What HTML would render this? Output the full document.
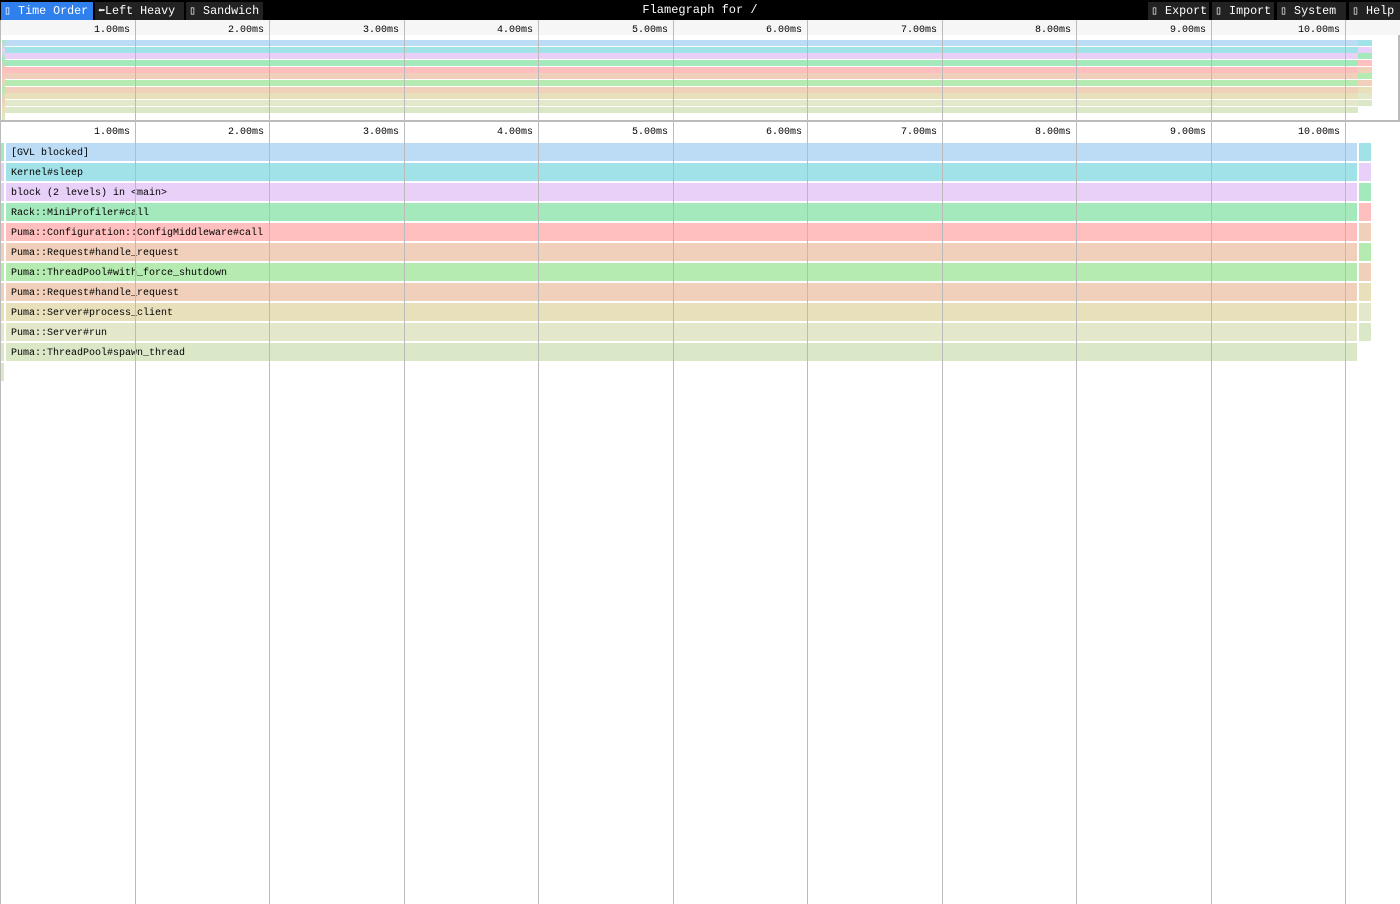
<!DOCTYPE html>
<html><head><meta charset="utf-8"><style>
*{margin:0;padding:0;box-sizing:border-box}
body{width:1400px;height:904px;background:#fff;position:relative;overflow:hidden;font-family:"Liberation Mono",monospace;}
.a{position:absolute}
.top{left:0;top:0;width:1400px;height:20px;background:#000}
.tab{position:absolute;top:2px;height:18px;line-height:19px;background:#222;color:#fff;font-size:11.7px;padding-left:3px;white-space:nowrap}
.g{position:absolute;width:1px;background:#bbb;z-index:5}
.lbl{position:absolute;font-size:10px;color:#000;text-align:right;width:80px;z-index:6}
.r{position:absolute;height:18px;font-size:10px;line-height:22px;padding-left:5px;color:#000;white-space:nowrap}
.m{position:absolute;height:6px}
</style></head><body>
<div class="a top"></div>
<div class="tab" style="left:1px;width:92px;background:#2f80ed">▯ Time Order</div>
<div class="tab" style="left:95px;width:89px">⬅Left Heavy</div>
<div class="tab" style="left:186px;width:77px">▯ Sandwich</div>
<div class="a" style="left:0;top:1px;width:1400px;text-align:center;color:#fff;font-size:12px;line-height:18px">Flamegraph for /</div>
<div class="tab" style="left:1148px;width:61px">▯ Export</div>
<div class="tab" style="left:1212px;width:62px">▯ Import</div>
<div class="tab" style="left:1277px;width:69px">▯  System</div>
<div class="tab" style="left:1349px;width:51px">▯ Help</div>

<div class="a" style="left:0;top:20px;width:1400px;height:15px;background:#f6f6f6"></div>
<div class="a" style="left:0;top:20px;width:1px;height:884px;background:#bbb;z-index:5"></div>
<div class="a" style="left:1398px;top:35px;width:2px;height:87px;background:#bbb"></div>
<div class="a" style="left:0;top:120px;width:1400px;height:2px;background:#bbb;z-index:5"></div>

<div class="m" style="left:5px;top:40px;width:1353px;background:#bcdcf5"></div>
<div class="m" style="left:5px;top:47px;width:1353px;background:#a1e1e8"></div>
<div class="m" style="left:5px;top:53px;width:1353px;background:#e8d0f8"></div>
<div class="m" style="left:5px;top:60px;width:1353px;background:#a3e9bb"></div>
<div class="m" style="left:5px;top:67px;width:1353px;background:#ffbfbf"></div>
<div class="m" style="left:5px;top:73px;width:1353px;background:#f0d0bb"></div>
<div class="m" style="left:5px;top:80px;width:1353px;background:#b5ebb0"></div>
<div class="m" style="left:5px;top:87px;width:1353px;background:#f0d0bb"></div>
<div class="m" style="left:5px;top:93px;width:1353px;background:#e8dfbb"></div>
<div class="m" style="left:5px;top:100px;width:1353px;background:#e3e8cb"></div>
<div class="m" style="left:5px;top:107px;width:1353px;background:#dbe8c8"></div>
<div class="m" style="left:1358px;top:40px;width:14px;background:#a1e1e8"></div>
<div class="m" style="left:1358px;top:47px;width:14px;background:#e8d0f8"></div>
<div class="m" style="left:1358px;top:53px;width:14px;background:#a3e9bb"></div>
<div class="m" style="left:1358px;top:60px;width:14px;background:#ffbfbf"></div>
<div class="m" style="left:1358px;top:67px;width:14px;background:#f0d0bb"></div>
<div class="m" style="left:1358px;top:73px;width:14px;background:#b5ebb0"></div>
<div class="m" style="left:1358px;top:80px;width:14px;background:#f0d0bb"></div>
<div class="m" style="left:1358px;top:87px;width:14px;background:#e8dfbb"></div>
<div class="m" style="left:1358px;top:93px;width:14px;background:#e3e8cb"></div>
<div class="m" style="left:1358px;top:100px;width:14px;background:#dbe8c8"></div>
<div class="a" style="left:2px;top:40px;width:3px;height:80px;background:linear-gradient(#a3e9bb,#e8d0f8,#a3e9bb,#ffbfbf,#f0d0bb,#b5ebb0,#f0d0bb,#e8dfbb,#dbe8c8)"></div>

<div class="g" style="left:135px;top:20px;height:100px"></div><div class="g" style="left:135px;top:122px;height:782px"></div>
<div class="g" style="left:269px;top:20px;height:100px"></div><div class="g" style="left:269px;top:122px;height:782px"></div>
<div class="g" style="left:404px;top:20px;height:100px"></div><div class="g" style="left:404px;top:122px;height:782px"></div>
<div class="g" style="left:538px;top:20px;height:100px"></div><div class="g" style="left:538px;top:122px;height:782px"></div>
<div class="g" style="left:673px;top:20px;height:100px"></div><div class="g" style="left:673px;top:122px;height:782px"></div>
<div class="g" style="left:807px;top:20px;height:100px"></div><div class="g" style="left:807px;top:122px;height:782px"></div>
<div class="g" style="left:942px;top:20px;height:100px"></div><div class="g" style="left:942px;top:122px;height:782px"></div>
<div class="g" style="left:1076px;top:20px;height:100px"></div><div class="g" style="left:1076px;top:122px;height:782px"></div>
<div class="g" style="left:1211px;top:20px;height:100px"></div><div class="g" style="left:1211px;top:122px;height:782px"></div>
<div class="g" style="left:1345px;top:20px;height:100px"></div><div class="g" style="left:1345px;top:122px;height:782px"></div>

<div class="lbl" style="left:50px;top:25px">1.00ms</div><div class="lbl" style="left:50px;top:127px">1.00ms</div>
<div class="lbl" style="left:184px;top:25px">2.00ms</div><div class="lbl" style="left:184px;top:127px">2.00ms</div>
<div class="lbl" style="left:319px;top:25px">3.00ms</div><div class="lbl" style="left:319px;top:127px">3.00ms</div>
<div class="lbl" style="left:453px;top:25px">4.00ms</div><div class="lbl" style="left:453px;top:127px">4.00ms</div>
<div class="lbl" style="left:588px;top:25px">5.00ms</div><div class="lbl" style="left:588px;top:127px">5.00ms</div>
<div class="lbl" style="left:722px;top:25px">6.00ms</div><div class="lbl" style="left:722px;top:127px">6.00ms</div>
<div class="lbl" style="left:857px;top:25px">7.00ms</div><div class="lbl" style="left:857px;top:127px">7.00ms</div>
<div class="lbl" style="left:991px;top:25px">8.00ms</div><div class="lbl" style="left:991px;top:127px">8.00ms</div>
<div class="lbl" style="left:1126px;top:25px">9.00ms</div><div class="lbl" style="left:1126px;top:127px">9.00ms</div>
<div class="lbl" style="left:1260px;top:25px">10.00ms</div><div class="lbl" style="left:1260px;top:127px">10.00ms</div>

<div class="r" style="left:6px;top:143px;width:1351px;background:#bcdcf5">[GVL blocked]</div>
<div class="r" style="left:6px;top:163px;width:1351px;background:#a1e1e8">Kernel#sleep</div>
<div class="r" style="left:6px;top:183px;width:1351px;background:#e8d0f8">block (2 levels) in &lt;main&gt;</div>
<div class="r" style="left:6px;top:203px;width:1351px;background:#a3e9bb">Rack::MiniProfiler#call</div>
<div class="r" style="left:6px;top:223px;width:1351px;background:#ffbfbf">Puma::Configuration::ConfigMiddleware#call</div>
<div class="r" style="left:6px;top:243px;width:1351px;background:#f0d0bb">Puma::Request#handle_request</div>
<div class="r" style="left:6px;top:263px;width:1351px;background:#b5ebb0">Puma::ThreadPool#with_force_shutdown</div>
<div class="r" style="left:6px;top:283px;width:1351px;background:#f0d0bb">Puma::Request#handle_request</div>
<div class="r" style="left:6px;top:303px;width:1351px;background:#e8dfbb">Puma::Server#process_client</div>
<div class="r" style="left:6px;top:323px;width:1351px;background:#e3e8cb">Puma::Server#run</div>
<div class="r" style="left:6px;top:343px;width:1351px;background:#dbe8c8">Puma::ThreadPool#spawn_thread</div>

<div class="r" style="left:1359px;top:143px;width:12px;background:#a1e1e8"></div>
<div class="r" style="left:1359px;top:163px;width:12px;background:#e8d0f8"></div>
<div class="r" style="left:1359px;top:183px;width:12px;background:#a3e9bb"></div>
<div class="r" style="left:1359px;top:203px;width:12px;background:#ffbfbf"></div>
<div class="r" style="left:1359px;top:223px;width:12px;background:#f0d0bb"></div>
<div class="r" style="left:1359px;top:243px;width:12px;background:#b5ebb0"></div>
<div class="r" style="left:1359px;top:263px;width:12px;background:#f0d0bb"></div>
<div class="r" style="left:1359px;top:283px;width:12px;background:#e8dfbb"></div>
<div class="r" style="left:1359px;top:303px;width:12px;background:#e3e8cb"></div>
<div class="r" style="left:1359px;top:323px;width:12px;background:#dbe8c8"></div>

<div class="r" style="left:1px;top:143px;width:3px;padding:0;background:#a3e9bb"></div>
<div class="r" style="left:1px;top:163px;width:3px;padding:0;background:#e8d0f8"></div>
<div class="r" style="left:1px;top:183px;width:3px;padding:0;background:#e8d0f8"></div>
<div class="r" style="left:1px;top:203px;width:3px;padding:0;background:#a3e9bb"></div>
<div class="r" style="left:1px;top:223px;width:3px;padding:0;background:#ffbfbf"></div>
<div class="r" style="left:1px;top:243px;width:3px;padding:0;background:#f0d0bb"></div>
<div class="r" style="left:1px;top:263px;width:3px;padding:0;background:#b5ebb0"></div>
<div class="r" style="left:1px;top:283px;width:3px;padding:0;background:#f0d0bb"></div>
<div class="r" style="left:1px;top:303px;width:3px;padding:0;background:#e8dfbb"></div>
<div class="r" style="left:1px;top:323px;width:3px;padding:0;background:#e3e8cb"></div>
<div class="r" style="left:1px;top:343px;width:3px;padding:0;background:#dbe8c8"></div>
<div class="r" style="left:1px;top:363px;width:3px;padding:0;background:#dbe8c8"></div>
</body></html>
